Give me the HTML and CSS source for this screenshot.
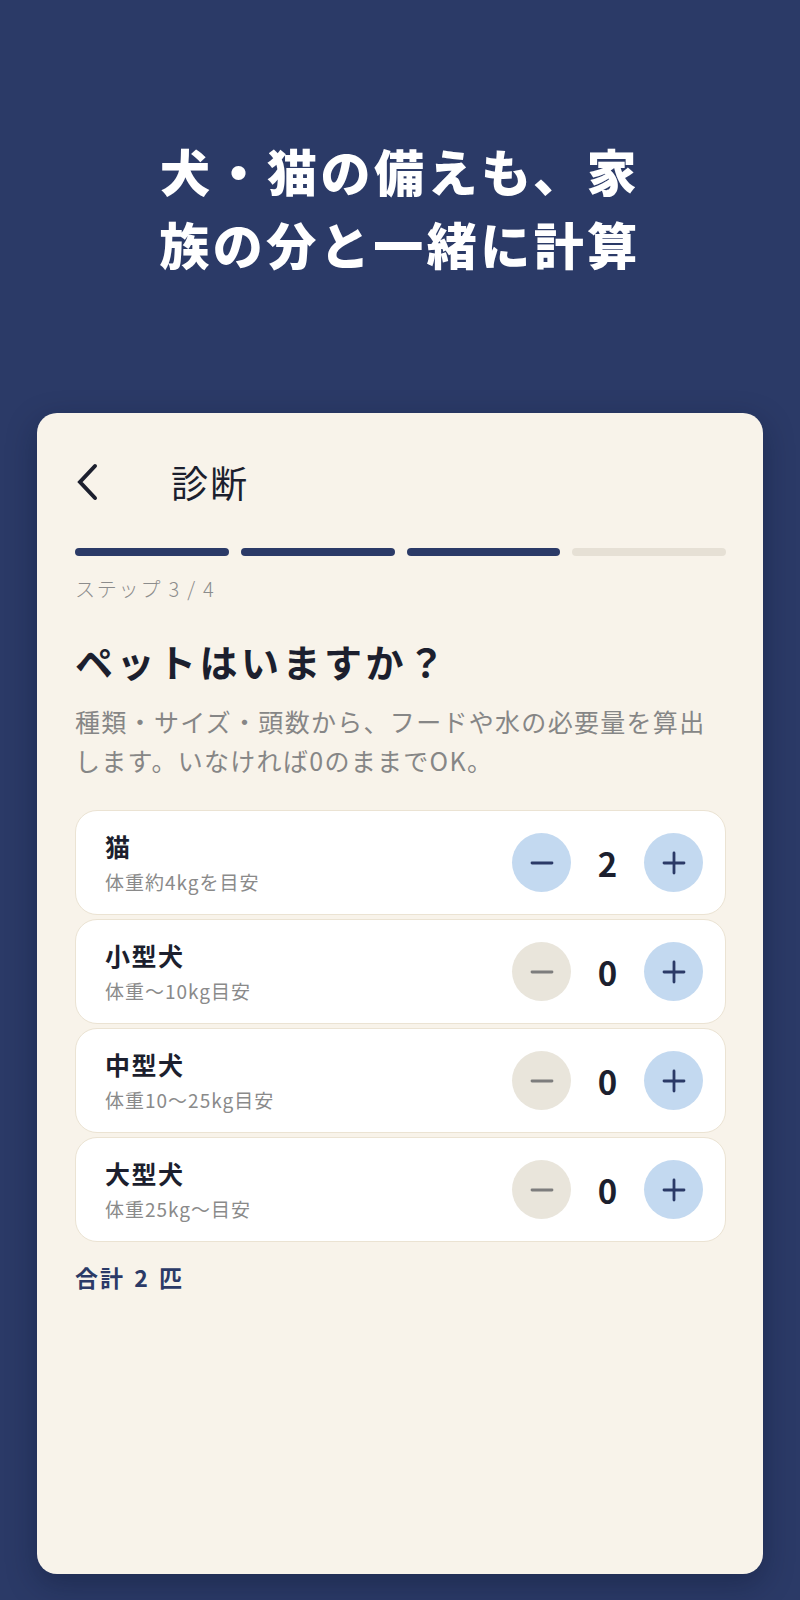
FILE: index.html
```html
<!DOCTYPE html>
<html lang="ja">
<head>
<meta charset="utf-8">
<title>診断</title>
<link rel="stylesheet" href="styles.css">
</head>
<body>
<div class="page">
  <h1 class="hero">犬・猫の備えも、家<br>族の分と一緒に計算</h1>
  <div class="card">
    <div class="header">
      <div class="back">
        <svg width="24" height="38" viewBox="0 0 24 38"><polyline points="19,3 4,19 19,35" fill="none" stroke="#1c1f2e" stroke-width="4" stroke-linecap="round" stroke-linejoin="miter"/></svg>
      </div>
      <div class="header-title">診断</div>
    </div>
    <div class="progress">
      <div class="seg done"></div>
      <div class="seg done"></div>
      <div class="seg done"></div>
      <div class="seg"></div>
    </div>
    <div class="step">ステップ 3 / 4</div>
    <h2 class="title">ペットはいますか？</h2>
    <p class="desc">種類・サイズ・頭数から、フードや水の必要量を算出します。いなければ0のままでOK。</p>
    <div class="list">
      <div class="row">
        <div class="info"><div class="name">猫</div><div class="sub">体重約4kgを目安</div></div>
        <div class="counter">
          <div class="btn active"><svg width="24" height="24" viewBox="0 0 24 24"><line x1="2" y1="12" x2="22" y2="12" stroke="#2b3a67" stroke-width="2.8" stroke-linecap="round"/></svg></div>
          <div class="num">2</div>
          <div class="btn active"><svg width="24" height="24" viewBox="0 0 24 24"><line x1="2" y1="12" x2="22" y2="12" stroke="#2b3a67" stroke-width="2.8" stroke-linecap="round"/><line x1="12" y1="2" x2="12" y2="22" stroke="#2b3a67" stroke-width="2.8" stroke-linecap="round"/></svg></div>
        </div>
      </div>
      <div class="row">
        <div class="info"><div class="name">小型犬</div><div class="sub">体重〜10kg目安</div></div>
        <div class="counter">
          <div class="btn off"><svg width="24" height="24" viewBox="0 0 24 24"><line x1="2" y1="12" x2="22" y2="12" stroke="#7d7d7d" stroke-width="2.8" stroke-linecap="round"/></svg></div>
          <div class="num">0</div>
          <div class="btn active"><svg width="24" height="24" viewBox="0 0 24 24"><line x1="2" y1="12" x2="22" y2="12" stroke="#2b3a67" stroke-width="2.8" stroke-linecap="round"/><line x1="12" y1="2" x2="12" y2="22" stroke="#2b3a67" stroke-width="2.8" stroke-linecap="round"/></svg></div>
        </div>
      </div>
      <div class="row">
        <div class="info"><div class="name">中型犬</div><div class="sub">体重10〜25kg目安</div></div>
        <div class="counter">
          <div class="btn off"><svg width="24" height="24" viewBox="0 0 24 24"><line x1="2" y1="12" x2="22" y2="12" stroke="#7d7d7d" stroke-width="2.8" stroke-linecap="round"/></svg></div>
          <div class="num">0</div>
          <div class="btn active"><svg width="24" height="24" viewBox="0 0 24 24"><line x1="2" y1="12" x2="22" y2="12" stroke="#2b3a67" stroke-width="2.8" stroke-linecap="round"/><line x1="12" y1="2" x2="12" y2="22" stroke="#2b3a67" stroke-width="2.8" stroke-linecap="round"/></svg></div>
        </div>
      </div>
      <div class="row">
        <div class="info"><div class="name">大型犬</div><div class="sub">体重25kg〜目安</div></div>
        <div class="counter">
          <div class="btn off"><svg width="24" height="24" viewBox="0 0 24 24"><line x1="2" y1="12" x2="22" y2="12" stroke="#7d7d7d" stroke-width="2.8" stroke-linecap="round"/></svg></div>
          <div class="num">0</div>
          <div class="btn active"><svg width="24" height="24" viewBox="0 0 24 24"><line x1="2" y1="12" x2="22" y2="12" stroke="#2b3a67" stroke-width="2.8" stroke-linecap="round"/><line x1="12" y1="2" x2="12" y2="22" stroke="#2b3a67" stroke-width="2.8" stroke-linecap="round"/></svg></div>
        </div>
      </div>
    </div>
    <div class="total">合計 2 匹</div>
  </div>
</div>
</body>
</html>
```

FILE: styles.css
```css
* { box-sizing: border-box; }
html, body {
  margin: 0;
  padding: 0;
}
body {
  background: #2b3a67;
  font-family: "Noto Sans CJK JP", "Noto Sans", sans-serif;
  width: 800px;
  height: 1600px;
  overflow: hidden;
}
.page {
  padding-top: 134px;
}
.hero {
  margin: 0;
  color: #ffffff;
  font-size: 50px;
  font-weight: 900;
  line-height: 73px;
  letter-spacing: 3.5px;
  text-align: center;
}
.card {
  margin: 133px 37px 0;
  height: 1161px;
  background: #f8f3ea;
  border-radius: 20px;
  padding: 39px 37px 0 38px;
  box-shadow: 0 10px 30px rgba(10, 18, 40, 0.35);
}
.header {
  display: flex;
  align-items: center;
  height: 60px;
}
.back {
  width: 96px;
  padding-left: 1px;
  display: flex;
  align-items: center;
}
.header-title {
  font-size: 37px;
  font-weight: 400;
  color: #1c1f2e;
  letter-spacing: 2px;
}
.progress {
  display: flex;
  gap: 12px;
  margin-top: 36px;
}
.seg {
  flex: 1;
  height: 8px;
  border-radius: 4px;
  background: #e6e0d5;
}
.seg.done {
  background: #2b3a67;
}
.step {
  margin-top: 19px;
  font-size: 20px;
  line-height: 28px;
  color: #8c8c8c;
  letter-spacing: 1.8px;
  font-weight: 300;
}
.title {
  margin: 33px 0 0;
  font-size: 38px;
  line-height: 50px;
  font-weight: 700;
  color: #1c1f2e;
  letter-spacing: 3.5px;
}
.desc {
  margin: 16px 0 0;
  font-size: 25px;
  line-height: 39px;
  color: #868686;
  letter-spacing: 1.3px;
  font-weight: 400;
}
.list {
  margin-top: 30px;
  display: flex;
  flex-direction: column;
  gap: 4px;
}
.row {
  height: 105px;
  background: #ffffff;
  border: 1.5px solid #ebe3d3;
  border-radius: 22px;
  display: flex;
  align-items: center;
  justify-content: space-between;
  padding: 0 22px 0 29px;
}
.info {
  display: flex;
  flex-direction: column;
  gap: 7px;
}
.name {
  font-size: 25px;
  line-height: 32px;
  font-weight: 700;
  color: #1c1f2e;
  letter-spacing: 1.5px;
}
.sub {
  font-size: 19px;
  line-height: 26px;
  color: #8a8a8a;
  letter-spacing: 1px;
}
.counter {
  display: flex;
  align-items: center;
}
.btn {
  width: 59px;
  height: 59px;
  border-radius: 50%;
  display: flex;
  align-items: center;
  justify-content: center;
}
.btn.active {
  background: #c3d9f0;
}
.btn.off {
  background: #e9e5db;
}
.num {
  width: 73px;
  text-align: center;
  font-size: 33px;
  font-weight: 700;
  color: #1c1f2e;
  line-height: 40px;
}
.total {
  margin-top: 20px;
  font-size: 23px;
  line-height: 30px;
  font-weight: 700;
  color: #2b3a67;
  letter-spacing: 2px;
  word-spacing: 2px;
}
```
